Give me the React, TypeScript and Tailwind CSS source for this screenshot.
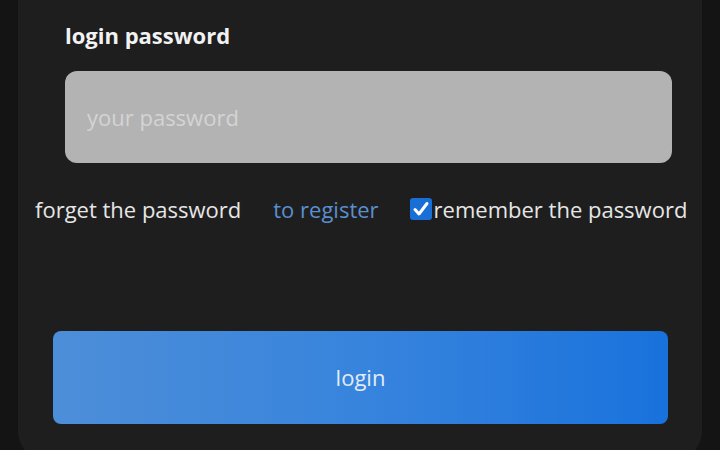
import { useState } from "react";

const font = { fontFamily: '"Open Sans", "Noto Sans", Arial, sans-serif' };

export default function App() {
  const [remember, setRemember] = useState(true);

  return (
    <div className="w-[720px] h-[450px] bg-[#141414] overflow-hidden" style={font}>
      <div className="ml-[18px] w-[684px] h-[461px] bg-[#1e1e1e] rounded-b-[30px] flex flex-col">
        <label className="ml-[47px] mt-[20px] text-[22px] leading-[30px] font-bold text-[#f2f2f2]">
          login password
        </label>

        <input
          type="password"
          placeholder="your password"
          className="ml-[47px] mt-[21px] w-[607px] h-[92px] rounded-[12px] bg-[#b3b3b3] px-[22px] text-[22px] text-[#333] placeholder:text-[#d4d4d4] outline-none"
        />

        <div className="ml-[17px] mt-[31px] flex items-center h-[30px] text-[22px] text-[#e6e6e6]">
          <a href="#" className="mr-[32px]">forget the password</a>
          <a href="#" className="text-[#5a8fcf] mr-[31px]">to register</a>
          <label className="flex items-center cursor-pointer">
            <span
              onClick={() => setRemember(!remember)}
              className="w-[22px] h-[22px] rounded-[3px] bg-[#1a6fd6] flex items-center justify-center mr-[2px]"
            >
              {remember && (
                <svg width="18" height="18" viewBox="0 0 18 18">
                  <path d="M3 9.5 L7 14 L15 3.5" stroke="#fff" strokeWidth="3" fill="none" strokeLinecap="round" strokeLinejoin="round" />
                </svg>
              )}
            </span>
            remember the password
          </label>
        </div>

        <button className="ml-[35px] mt-[107px] w-[615px] h-[93px] rounded-[8px] bg-gradient-to-r from-[#4d8ed8] via-[#3784dd] to-[#1872dc] text-[22px] text-[#e3ecf6]">
          login
        </button>
      </div>
    </div>
  );
}
